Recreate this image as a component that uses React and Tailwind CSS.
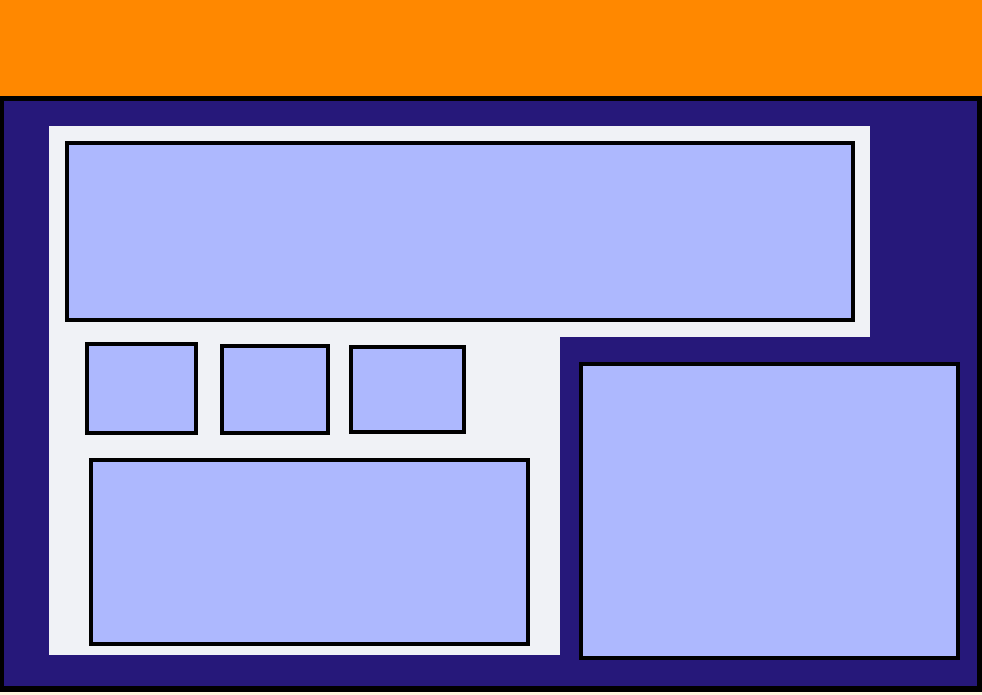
import React from 'react';

const Box = ({ className }) => (
  <div className={`border-4 border-black bg-[#adb8fe] ${className}`} />
);

const App = () => {
  return (
    <div className="w-[982px] h-[695px] bg-[#fff4dc] overflow-hidden">
      <div className="h-[96px] bg-[#ff8800]" />
      <div className="h-[596px] bg-[#26187a] border-black border-t-[5px] border-b-[6px] border-l-4 border-r-[5px] pl-[45px] pt-[25px]">
        <div className="w-[821px] h-[211px] bg-[#f0f2f6] pl-[16px] pt-[15px]">
          <Box className="w-[790px] h-[181px]" />
        </div>
        <div className="flex items-start">
          <div className="w-[511px] h-[318px] bg-[#f0f2f6] pt-[5px]">
            <div className="flex items-start">
              <Box className="ml-[36px] w-[113px] h-[93px]" />
              <Box className="ml-[22px] mt-[2px] w-[110px] h-[91px]" />
              <Box className="ml-[19px] mt-[3px] w-[117px] h-[89px]" />
            </div>
            <Box className="ml-[40px] mt-[23px] w-[441px] h-[188px]" />
          </div>
          <Box className="ml-[19px] mt-[25px] w-[381px] h-[298px]" />
        </div>
      </div>
    </div>
  );
};

export default App;
